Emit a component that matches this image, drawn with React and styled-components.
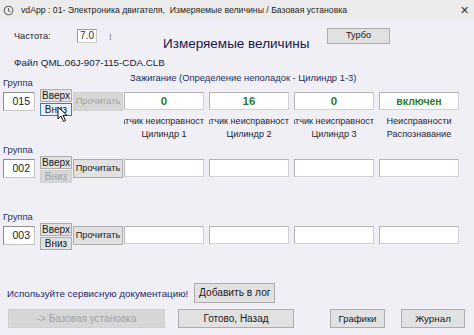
import React from "react";
import styled, { createGlobalStyle, css } from "styled-components";

const GlobalStyle = createGlobalStyle`
  html, body {
    margin: 0;
    padding: 0;
    width: 474px;
    height: 335px;
    overflow: hidden;
    background: #efeff5;
  }
  * { box-sizing: border-box; }
`;

const Window = styled.div`
  width: 474px;
  height: 335px;
  display: flex;
  flex-direction: column;
  background: #efeff5;
  font-family: "Liberation Sans", Arial, sans-serif;
  font-size: 9.5px;
  color: #1e1e1e;
`;

const TitleBar = styled.div`
  height: 20px;
  display: flex;
  align-items: center;
  padding: 0 0 0 3px;
  background: #ececec;
  color: #1e1e1e;
`;

const TitleText = styled.span`
  margin-left: 7px;
  font-size: 8.7px;
  white-space: nowrap;
  flex: 1;
`;

const CloseGlyph = styled.span`
  width: 18px;
  margin-right: 1px;
  text-align: center;
  font-size: 11px;
  color: #333;
`;

const Content = styled.div`
  display: flex;
  flex-direction: column;
  flex: 1;
`;

const TopArea = styled.div`
  display: flex;
  align-items: flex-start;
  margin-top: 8px;
  padding-left: 14px;
`;

const FreqBlock = styled.div`
  width: 149px;
  height: 16px;
  display: flex;
  align-items: center;
`;

const FreqLabel = styled.span`
  width: 63px;
  font-size: 9.2px;
  color: #22223a;
`;

const SmallInput = styled.div`
  width: 20px;
  height: 14px;
  line-height: 12px;
  text-align: center;
  font-size: 10px;
  background: #fff;
  border: 1px solid #c9c9c9;
  border-top-color: #9a9a9a;
  border-left-color: #9a9a9a;
  color: #333;
`;

const Bang = styled.span`
  margin-left: 12px;
  color: #777;
`;

const MainTitle = styled.div`
  width: 164px;
  margin-top: 7px;
  font-size: 13.5px;
  line-height: 18px;
  color: #17174a;
  white-space: nowrap;
`;

const Button = styled.button`
  width: ${(p) => p.$w}px;
  height: ${(p) => p.$h || 19}px;
  margin: 0;
  padding: 0;
  font-family: inherit;
  font-size: ${(p) => p.$fs || 9.5}px;
  line-height: 1;
  color: #1a1a1a;
  background: #e1e1e1;
  border: 1px solid #adadad;
  white-space: nowrap;
  overflow: hidden;
  ${(p) =>
    p.$hover &&
    css`
      background: #e5f1fb;
      border-color: #3c7fb1;
    `}
  ${(p) =>
    p.$off &&
    css`
      color: #a3a3a3;
      background: #d6d6d6;
      border-color: #d0d0d0;
    `}
`;

const FileLine = styled.div`
  margin-top: 3px;
  padding-left: 14px;
  font-size: 9.8px;
  line-height: 13px;
  color: #22223a;
`;

const GroupBlock = styled.div`
  display: grid;
  grid-template-columns: 121px auto;
  grid-template-rows: 17px 50px;
  padding-left: 3px;
  margin-top: ${(p) => p.$top || 0}px;
`;

const GroupLabel = styled.div`
  align-self: end;
  line-height: 12px;
  font-size: 9.4px;
  color: #26305f;
`;

const ChannelTitle = styled.div`
  align-self: start;
  padding-left: 6px;
  line-height: 12px;
  font-size: 9.4px;
  color: #26305f;
  white-space: nowrap;
`;

const Controls = styled.div`
  display: flex;
  align-items: flex-start;
  position: relative;
`;

const GroupInput = styled.div`
  width: 32px;
  height: 19px;
  margin-top: 3px;
  padding-right: 4px;
  line-height: 17px;
  text-align: right;
  font-size: 10.5px;
  background: #fff;
  border: 1px solid #c4c4c4;
  border-top-color: #8f8f8f;
  border-left-color: #8f8f8f;
  color: #222;
`;

const ArrowStack = styled.div`
  display: flex;
  flex-direction: column;
  gap: 1px;
  margin-left: 5px;
`;

const ReadButton = styled(Button)`
  margin-left: 1px;
  margin-top: 3px;
`;

const Channels = styled.div`
  display: flex;
  gap: 5px;
`;

const Channel = styled.div`
  width: 80px;
  display: flex;
  flex-direction: column;
`;

const ValueField = styled.div`
  height: 18px;
  margin-top: 3px;
  line-height: 16px;
  text-align: center;
  background: #fff;
  border: 1px solid #d2d2d2;
  border-top-color: #b4b4b4;
  border-left-color: #b4b4b4;
  color: #2b7a2b;
  font-weight: bold;
  font-size: ${(p) => (p.$small ? 10.5 : 11.5)}px;
`;

const Caption = styled.div`
  margin-top: 5px;
  width: 80px;
  display: flex;
  flex-direction: column;
  overflow: hidden;
`;

const CaptionLine = styled.div`
  display: flex;
  justify-content: center;
  white-space: nowrap;
  line-height: 13px;
  font-size: 9.1px;
  color: #26263a;
`;

const Cursor = styled.svg`
  position: absolute;
  left: 54px;
  top: 17px;
`;

const FooterRow = styled.div`
  display: flex;
  align-items: center;
  margin-top: ${(p) => p.$top}px;
  padding-left: ${(p) => p.$left || 0}px;
`;

const Hint = styled.span`
  font-size: 9.8px;
  color: #24286a;
`;

const channelsMeta = [
  { value: "0", top: "Датчик неисправностей", bottom: "Цилиндр 1" },
  { value: "16", top: "Датчик неисправностей", bottom: "Цилиндр 2" },
  { value: "0", top: "Датчик неисправностей", bottom: "Цилиндр 3" },
  { value: "включен", small: true, top: "Неисправности", bottom: "Распознавание" },
];

function AppIcon() {
  return (
    <svg width="11" height="11" viewBox="0 0 11 11">
      <circle cx="5.5" cy="5.5" r="4.3" fill="none" stroke="#666" strokeWidth="1.1" />
      <path d="M5.5 3v2.7l1.8 1.2" fill="none" stroke="#666" strokeWidth="1.1" />
    </svg>
  );
}

function Group({ number, top, readOff, downOff, downHover, withData }) {
  return (
    <GroupBlock $top={top}>
      <GroupLabel>Группа</GroupLabel>
      <ChannelTitle>
        {withData ? "Зажигание (Определение неполадок - Цилиндр 1-3)" : ""}
      </ChannelTitle>
      <Controls>
        <GroupInput>{number}</GroupInput>
        <ArrowStack>
          <Button $w={32} $h={13} $fs={10}>
            Вверх
          </Button>
          <Button $w={32} $h={13} $fs={10} $off={downOff} $hover={downHover}>
            Вниз
          </Button>
        </ArrowStack>
        <ReadButton $w={50} $fs={9.2} $off={readOff}>
          Прочитать
        </ReadButton>
        {downHover && (
          <Cursor width="11" height="17" viewBox="0 0 11 17">
            <path
              d="M1 1 L1 13 L4 10 L6.5 15.5 L8.5 14.5 L6 9.3 L10 9.3 Z"
              fill="#fff"
              stroke="#111"
              strokeWidth="1"
              strokeLinejoin="round"
            />
          </Cursor>
        )}
      </Controls>
      <Channels>
        {channelsMeta.map((c, i) => (
          <Channel key={i}>
            <ValueField $small={c.small}>{withData ? c.value : ""}</ValueField>
            {withData && (
              <Caption>
                <CaptionLine>{c.top}</CaptionLine>
                <CaptionLine>{c.bottom}</CaptionLine>
              </Caption>
            )}
          </Channel>
        ))}
      </Channels>
    </GroupBlock>
  );
}

export default function App() {
  return (
    <>
      <GlobalStyle />
      <Window>
        <TitleBar>
          <AppIcon />
          <TitleText>
            vdApp : 01- Электроника двигателя,&nbsp; Измеряемые величины / Базовая установка
          </TitleText>
          <CloseGlyph>✕</CloseGlyph>
        </TitleBar>
        <Content>
          <TopArea>
            <FreqBlock>
              <FreqLabel>Частота:</FreqLabel>
              <SmallInput>7.0</SmallInput>
              <Bang>!</Bang>
            </FreqBlock>
            <MainTitle>Измеряемые величины</MainTitle>
            <Button $w={63} $h={16} $fs={9.2}>
              Турбо
            </Button>
          </TopArea>
          <FileLine>Файл QML.06J-907-115-CDA.CLB</FileLine>
          <Group number="015" top={3} readOff downHover withData />
          <Group number="002" downOff />
          <Group number="003" />
          <FooterRow $top={10} $left={7}>
            <Hint>Используйте сервисную документацию!</Hint>
            <Button $w={81} $h={20} $fs={10.2} style={{ marginLeft: 6 }}>
              Добавить в лог
            </Button>
          </FooterRow>
          <FooterRow $top={6} $left={8}>
            <Button $w={157} $fs={10} $off>
              -&gt; Базовая установка
            </Button>
            <Button $w={116} $fs={10} style={{ marginLeft: 13 }}>
              Готово, Назад
            </Button>
            <Button $w={55} style={{ marginLeft: 36 }}>
              Графики
            </Button>
            <Button $w={64} $fs={9.8} style={{ marginLeft: 16 }}>
              Журнал
            </Button>
          </FooterRow>
        </Content>
      </Window>
    </>
  );
}
